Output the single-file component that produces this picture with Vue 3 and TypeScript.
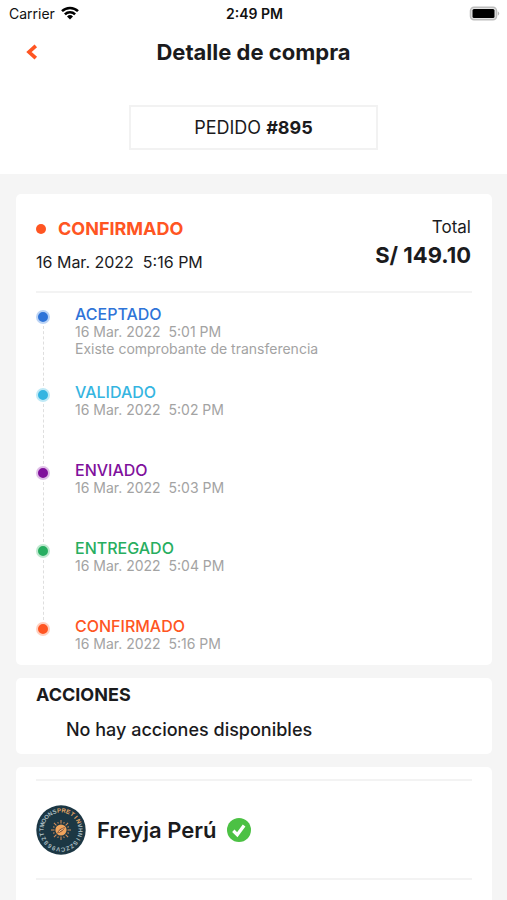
<script setup lang="ts">
interface Step {
  name: string
  date: string
  time: string
  tone: string
  note?: string
}

const steps: Step[] = [
  { name: 'ACEPTADO', date: '16 Mar. 2022', time: '5:01 PM', tone: 'blue', note: 'Existe comprobante de transferencia' },
  { name: 'VALIDADO', date: '16 Mar. 2022', time: '5:02 PM', tone: 'cyan' },
  { name: 'ENVIADO', date: '16 Mar. 2022', time: '5:03 PM', tone: 'purple' },
  { name: 'ENTREGADO', date: '16 Mar. 2022', time: '5:04 PM', tone: 'green' },
  { name: 'CONFIRMADO', date: '16 Mar. 2022', time: '5:16 PM', tone: 'orange' },
]

const rays: number[] = Array.from({ length: 16 }, (_, i) => i * 22.5)

// Letters around the store badge, clockwise from the top
const ring = [...'PRETINVHNISZZCV9682TTMOONS'].map((char, i, all) => ({
  char,
  angle: (i * 360) / all.length - 6,
  lit: i < 6,
}))
</script>

<template>
  <div class="screen">
    <div class="top">
      <div class="status-bar">
        <div class="carrier">
          <span>Carrier</span>
          <svg class="wifi" viewBox="0 0 18 14" aria-hidden="true">
            <g fill="none" stroke="#000" stroke-width="2.5">
              <path d="M1 5.2a11.3 11.3 0 0 1 16 0" />
              <path d="M3.9 8.3a7.2 7.2 0 0 1 10.2 0" />
            </g>
            <path d="M9 13.4 6 10.5a4.3 4.3 0 0 1 6 0z" />
          </svg>
        </div>
        <span class="clock">2:49 PM</span>
        <svg class="battery" viewBox="0 0 31 15" aria-hidden="true">
          <rect x="1.5" y="1.2" width="26" height="12.6" rx="3.5" fill="#e4e4e4" stroke="#bdbdbd" stroke-width="1.5" />
          <rect x="3.5" y="3" width="22" height="9" rx="1.5" />
          <path d="M28.8 5.2a2.6 2.6 0 0 1 0 4.6z" fill="#b5b5b5" />
        </svg>
      </div>
      <header class="nav">
        <button class="back" type="button" aria-label="Volver">
          <svg viewBox="0 0 12 16" aria-hidden="true">
            <path d="M9.8 1.8 3 8l6.8 6.2" fill="none" stroke="#ff5522" stroke-width="3.7" />
          </svg>
        </button>
        <h1>Detalle de compra</h1>
      </header>
      <div class="order">PEDIDO <strong>#895</strong></div>
    </div>

    <main class="cards">
      <section class="card summary">
        <div class="head">
          <div>
            <h2 class="state"><i class="bullet"></i>CONFIRMADO</h2>
            <p class="when">16 Mar. 2022&nbsp; 5:16 PM</p>
          </div>
          <div class="total">
            <p class="label">Total</p>
            <p class="amount">S/ 149.10</p>
          </div>
        </div>
        <ol class="timeline">
          <li v-for="step in steps" :key="step.name" :class="['step', step.tone]">
            <span class="rail"><i class="dot"></i></span>
            <div class="info">
              <h3>{{ step.name }}</h3>
              <p class="date">{{ step.date }}&nbsp; {{ step.time }}</p>
              <p v-if="step.note" class="note">{{ step.note }}</p>
            </div>
          </li>
        </ol>
      </section>

      <section class="card actions">
        <h2>ACCIONES</h2>
        <p>No hay acciones disponibles</p>
      </section>

      <section class="card store">
        <div class="store-row">
          <svg class="avatar" viewBox="0 0 50 50" aria-hidden="true">
            <circle cx="25" cy="25" r="24.7" fill="#1c3744" />
            <text
              v-for="(l, i) in ring"
              :key="i"
              class="ring-text"
              x="25"
              y="7.5"
              text-anchor="middle"
              :fill="l.lit ? '#e8a765' : '#a9bcc0'"
              :transform="`rotate(${l.angle} 25 25)`"
            >{{ l.char }}</text>
            <g stroke="#d9905a" stroke-width="1">
              <path v-for="(r, i) in rays" :key="r" :d="i % 2 ? 'M25 18v-1.5' : 'M25 18.5v-3.5'" :transform="`rotate(${r} 25 25)`" />
            </g>
            <circle cx="25" cy="25" r="5.6" fill="#f0a45c" />
            <path d="M21 28.5c1-3.5 4-5.5 8-6.5-1 3.5-4 5.5-8 6.5z" fill="#7c4b38" />
            <path d="m22.5 27 5-3.5" stroke="#ffd092" stroke-width="1" />
          </svg>
          <h2>Freyja Perú</h2>
          <svg class="verified" viewBox="0 0 24 24" aria-hidden="true">
            <circle cx="12" cy="12" r="12" fill="#4cc144" />
            <path d="m6.3 12.8 4 3.9 6.8-9.2" fill="none" stroke="#fff" stroke-width="3.3" />
          </svg>
        </div>
      </section>
    </main>
  </div>
</template>

<style>
body {
  margin: 0;
  background: #f5f5f5;
}
</style>

<style scoped>
.screen {
  display: flex;
  flex-direction: column;
  min-height: 100vh;
  font-family: Inter, "Liberation Sans", sans-serif;
  color: #1b1b1d;
}
h1, h2, h3, p, ol {
  margin: 0;
  padding: 0;
}
svg {
  display: block;
}
.top {
  background: #fff;
  padding-bottom: 24px;
}
.status-bar {
  display: grid;
  grid-template-columns: 1fr auto 1fr;
  align-items: center;
  height: 26px;
  padding: 0 7px 0 9px;
  font-size: 14px;
  color: #111;
}
.carrier {
  display: flex;
  align-items: center;
  gap: 6px;
}
.wifi {
  width: 18px;
  height: 14px;
}
.clock {
  font-weight: 600;
}
.battery {
  width: 31px;
  height: 15px;
  justify-self: end;
}
.nav {
  display: grid;
  grid-template-columns: 48px 1fr 48px;
  align-items: center;
  height: 52px;
}
.back {
  display: flex;
  justify-content: flex-end;
  padding: 8px 10px;
  border: 0;
  background: none;
}
.back svg {
  width: 12px;
  height: 16px;
}
h1 {
  text-align: center;
  font-size: 22px;
  line-height: 28px;
  font-weight: 700;
}
.order {
  box-sizing: border-box;
  width: 49%;
  margin: 27px auto 0;
  border: 2px solid #f2f2f2;
  text-align: center;
  font-size: 18px;
  line-height: 41px;
}
.cards {
  display: flex;
  flex: 1;
  flex-direction: column;
  gap: 13px;
  padding: 20px 15px 0 16px;
}
.card {
  padding: 0 20px;
  border-radius: 5px;
  background: #fff;
}
.head {
  display: flex;
  justify-content: space-between;
  padding: 20px 0 11px;
  border-bottom: 2px solid #f3f3f3;
}
.state {
  display: flex;
  align-items: center;
  gap: 12px;
  font-size: 18px;
  line-height: 30px;
  font-weight: 700;
  color: #ff5522;
}
.bullet {
  width: 10px;
  height: 10px;
  border-radius: 50%;
  background: currentColor;
}
.when {
  font-size: 16px;
  line-height: 36px;
}
.total {
  padding-right: 1px;
  text-align: right;
}
.label {
  font-size: 17px;
  line-height: 26px;
}
.amount {
  font-size: 22px;
  line-height: 30px;
  font-weight: 700;
}
.timeline {
  padding: 6px 0 12px;
  list-style: none;
}
.step {
  display: flex;
  gap: 25px;
  min-height: 78px;
}
.step:last-child {
  min-height: 42px;
}
.info {
  padding: 6px 0 0;
}
.rail {
  display: flex;
  flex-direction: column;
  align-items: center;
  width: 14px;
  padding-top: 11px;
}
.rail::after {
  content: "";
  flex: 1;
  margin: 2px 0 -9px;
  border-left: 1px dashed #dedede;
}
.step:last-child .rail::after {
  display: none;
}
.dot {
  box-sizing: border-box;
  width: 14px;
  height: 14px;
  border: 2px solid var(--halo);
  border-radius: 50%;
  background: var(--tone);
}
.blue { --tone: #2f74d8; --halo: #bcd4f5; }
.cyan { --tone: #35b5e1; --halo: #bfe9f6; }
.purple { --tone: #80109c; --halo: #dfbfe7; }
.green { --tone: #27ae60; --halo: #bfe8cf; }
.orange { --tone: #ff5522; --halo: #ffd0c0; }
h3 {
  font-size: 16px;
  line-height: 18px;
  font-weight: 500;
  color: var(--tone);
}
.date, .note {
  font-size: 14px;
  line-height: 18px;
  color: #a3a3a3;
}
.note {
  line-height: 16px;
}
.actions {
  padding-bottom: 10px;
}
.actions h2 {
  font-size: 18px;
  line-height: 34px;
  font-weight: 700;
}
.actions p {
  padding: 4px 0 0 30px;
  font-size: 18px;
  line-height: 28px;
  font-weight: 500;
}
.store {
  flex: 1;
  padding-top: 12px;
  border-radius: 5px 5px 0 0;
}
.store-row {
  display: flex;
  align-items: center;
  height: 97px;
  border: solid #f3f3f3;
  border-width: 2px 0;
}
.avatar {
  width: 50px;
  height: 50px;
}
.ring-text {
  font: 600 6px "Liberation Sans", sans-serif;
}
.store h2 {
  margin: 0 11px;
  font-size: 22px;
  line-height: 28px;
  font-weight: 600;
}
.verified {
  width: 24px;
  height: 24px;
}
</style>
